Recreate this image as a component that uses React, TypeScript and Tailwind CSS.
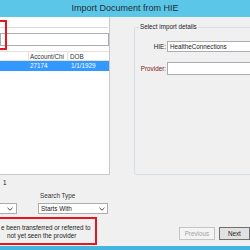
import React from 'react';

const Chevron: React.FC = () => (
    <svg width="6" height="4" viewBox="0 0 6 4" className="shrink-0">
        <path d="M0.5 0.8 L3 3.2 L5.5 0.8" fill="none" stroke="#333" strokeWidth="0.9" />
    </svg>
);

const App: React.FC = () => {
    return (
        <div className="w-[250px] h-[250px] overflow-hidden bg-[#f0f0f0] flex flex-col font-['Liberation_Sans',Arial,sans-serif] text-[6.3px] text-[#1a1a1a]">
            {/* title bar */}
            <div className="h-[17px] shrink-0 bg-[#5bc6e8] flex items-center justify-center text-[9px] text-[#1f2f36]">
                Import Document from HIE
            </div>

            <div className="flex-1 flex">
                {/* left side: search + results */}
                <div className="w-[110px] shrink-0 flex flex-col">
                    <div className="relative h-[158px] bg-white border-r border-b border-[#c9c9c9] flex flex-col">
                        <div className="absolute left-[-2px] top-[3px] w-[9px] h-[30px] border-2 border-[#e5161d]" />
                        <div className="mt-[10px] h-px w-[108px] bg-[#dadada]" />
                        <div className="mt-[5px] h-[13px] bg-white border border-[#abadb3]" />
                        <div className="mt-[5px] h-[10px] flex border-t border-b border-[#e3e3e3] text-[#333]">
                            <div className="w-[29px] border-r border-[#e3e3e3]" />
                            <div className="w-[39px] border-r border-[#e3e3e3] pl-[1px] leading-[9px] overflow-hidden whitespace-nowrap">Account/Chi</div>
                            <div className="flex-1 pl-[2px] leading-[9px]">DOB</div>
                        </div>
                        <div className="h-[10px] flex bg-[#3399ff] text-white leading-[10px]">
                            <div className="w-[29px]" />
                            <div className="w-[39px] pl-[1px]">27174</div>
                            <div className="flex-1 pl-[3px]">1/1/1929</div>
                        </div>
                    </div>

                    <div className="mt-[3px] h-[9px] leading-[9px] pl-[3px]">1</div>
                    <div className="mt-[5px] h-[8px] leading-[8px] pl-[40px] text-[#333]">Search Type</div>
                    <div className="mt-[3px] h-[11px] flex">
                        <div className="w-[17px] bg-white border border-[#acacac] border-l-0 flex items-center justify-end pr-[3px]">
                            <Chevron />
                        </div>
                        <div className="ml-[21px] w-[70px] bg-white border border-[#acacac] flex items-center justify-between pl-[2px] pr-[2px]">
                            <span>Starts With</span>
                            <Chevron />
                        </div>
                    </div>
                    <div className="mt-[3px] -ml-[3px] w-[100px] h-[28px] border-2 border-[#e5161d] pt-[5px] leading-[7.5px] whitespace-nowrap">
                        <div className="pl-[2px]">e been transferred or referred to</div>
                        <div className="pl-[8px]">not yet seen the provider</div>
                    </div>
                </div>

                {/* right side: import details */}
                <div className="flex-1 overflow-hidden flex flex-col">
                    <fieldset className="ml-[24px] mt-[6px] w-[130px] h-[152px] border border-[#d5dfe5] rounded-[2px] shrink-0">
                        <legend className="ml-[4px] px-[1px] leading-[8px] text-[#222]">Select import details</legend>
                        <div className="mt-[10px] h-[11px] flex items-center">
                            <div className="w-[32px] text-right pr-[1px]">HIE:</div>
                            <div className="flex-1 h-full bg-white border border-[#abadb3] flex items-center pl-[2px]">HealtheConnections</div>
                        </div>
                        <div className="mt-[10px] h-[13px] flex items-center">
                            <div className="w-[32px] text-right pr-[1px] text-[#7a2020]">Provider:</div>
                            <div className="flex-1 h-full bg-white border border-[#abadb3]" />
                        </div>
                    </fieldset>
                    <div className="mt-[52px] h-[13px] flex shrink-0">
                        <div className="ml-[69px] w-[39px] border border-[#c4c4c4] bg-[#f4f4f4] text-[#a3a3a3] flex items-center justify-center">Previous</div>
                        <div className="ml-[4px] w-[34px] border border-[#707070] bg-[#e1e1e1] flex items-center justify-center">Next</div>
                    </div>
                </div>
            </div>

            <div className="h-[4px] shrink-0 bg-[#45b5de]" />
        </div>
    );
};

export default App;
